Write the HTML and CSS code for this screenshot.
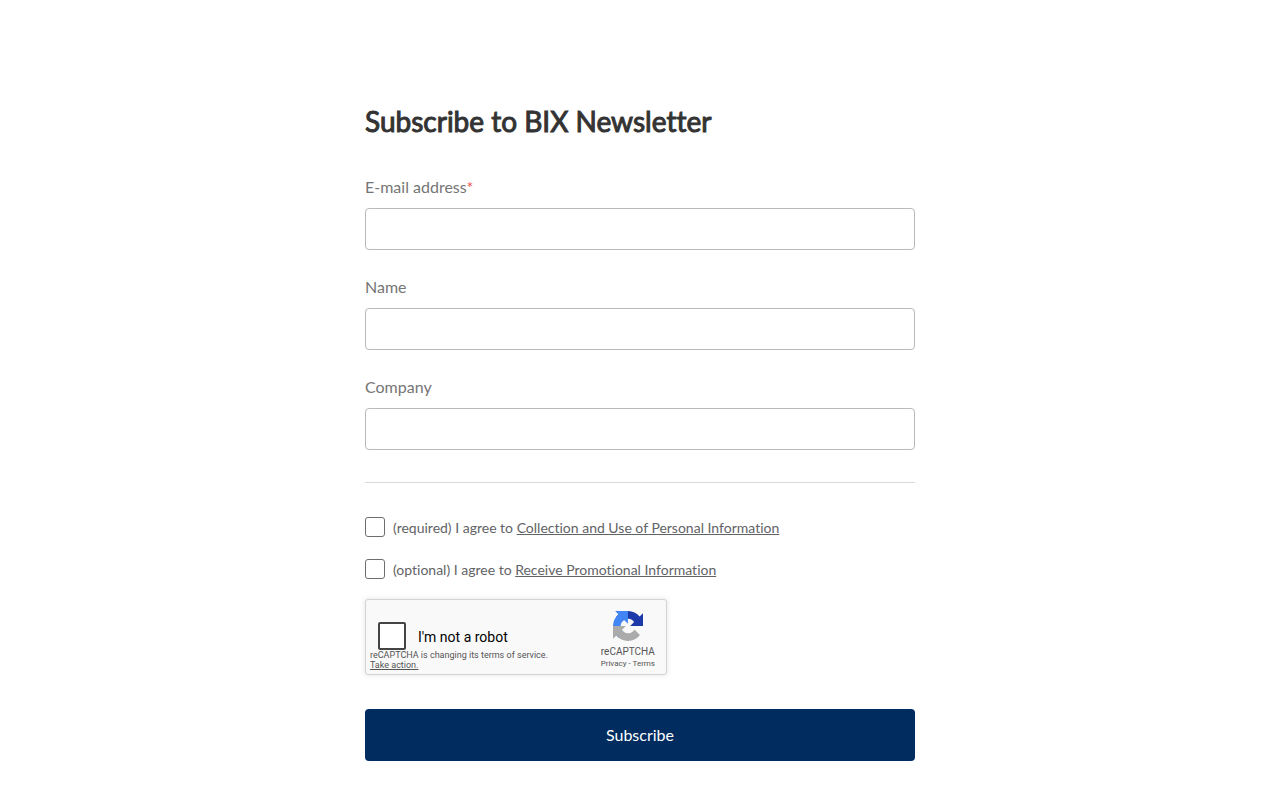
FILE: index.html
```html
<!DOCTYPE html>
<html lang="en">
<head>
    <meta charset="UTF-8">
    <meta name="viewport" content="width=device-width, initial-scale=1.0">
    <title>Subscribe to BIX Newsletter</title>
    <link rel="stylesheet" href="styles.css">
</head>
<body>
    <main class="subscribe">
        <h1>Subscribe to BIX Newsletter</h1>
        <form>
            <div class="field">
                <label for="email">E-mail address<span class="required">*</span></label>
                <input type="email" id="email" name="email" required>
            </div>
            <div class="field">
                <label for="name">Name</label>
                <input type="text" id="name" name="name">
            </div>
            <div class="field">
                <label for="company">Company</label>
                <input type="text" id="company" name="company">
            </div>
            <hr>
            <div class="agree">
                <input type="checkbox" id="agree-privacy" required>
                <label for="agree-privacy">(required) I agree to <a href="#privacy">Collection and Use of Personal Information</a></label>
            </div>
            <div class="agree">
                <input type="checkbox" id="agree-promo">
                <label for="agree-promo">(optional) I agree to <a href="#promo">Receive Promotional Information</a></label>
            </div>
            <div class="captcha">
                <div class="captcha-main">
                    <div class="captcha-check">
                        <input type="checkbox" id="robot">
                        <label for="robot">I'm not a robot</label>
                    </div>
                    <p class="captcha-notice">reCAPTCHA is changing its terms of service.<br><a href="#action">Take action.</a></p>
                </div>
                <div class="captcha-brand">
                    <svg width="30" height="30" viewBox="0 0 64 64" aria-hidden="true">
                        <path fill="#1c3aa9" d="M64 31.955l-.033-1.37V4.687l-7.16 7.16C50.948 4.674 42.033.093 32.05.093c-10.4 0-19.622 4.96-25.458 12.64l11.736 11.86a15.55 15.55 0 0 1 4.754-5.334c2.05-1.6 4.952-2.906 8.968-2.906.485 0 .86.057 1.135.163 4.976.393 9.288 3.14 11.828 7.124l-8.307 8.307L64 31.953"/>
                        <path fill="#4285f4" d="M31.862.094l-1.37.033H4.594l7.16 7.16C4.58 13.147 0 22.06 0 32.046c0 10.4 4.96 19.622 12.64 25.458L24.5 45.768a15.55 15.55 0 0 1-5.334-4.754c-1.6-2.05-2.906-4.952-2.906-8.968 0-.485.057-.86.163-1.135.393-4.976 3.14-9.288 7.124-11.828l8.307 8.307L31.86.095"/>
                        <path fill="#ababab" d="M.001 32.045l.033 1.37v25.898l7.16-7.16c5.86 7.173 14.774 11.754 24.76 11.754 10.4 0 19.622-4.96 25.458-12.64l-11.736-11.86a15.55 15.55 0 0 1-4.754 5.334c-2.05 1.6-4.952 2.906-8.968 2.906-.485 0-.86-.057-1.135-.163-4.976-.393-9.288-3.14-11.828-7.124l8.307-8.307c-10.522.04-22.4.066-27.295-.005"/>
                    </svg>
                    <span class="captcha-name">reCAPTCHA</span>
                    <span class="captcha-links"><a href="#captcha-privacy">Privacy</a> - <a href="#captcha-terms">Terms</a></span>
                </div>
            </div>
            <button type="submit">Subscribe</button>
        </form>
    </main>
</body>
</html>
```
FILE: styles.css
```css
* {
    box-sizing: border-box;
}
body {
    margin: 0;
    font-family: Lato, sans-serif;
    font-size: 16px;
    font-variant-ligatures: none;
    color: #757575;
    background-color: #fff;
}
.subscribe {
    max-width: 582px;
    margin: 0 auto;
    padding: 103px 16px 32px;
}
h1 {
    margin: 0 0 36px;
    font-size: 28px;
    line-height: 36px;
    font-weight: 400;
    color: #333;
    -webkit-text-stroke: 1px #333;
}
.field {
    margin-bottom: 25px;
}
.field label {
    display: block;
    line-height: 24px;
    margin-bottom: 9px;
}
.required {
    color: #f05050;
}
.field input {
    display: block;
    width: 100%;
    height: 42px;
    padding: 0 12px;
    font: inherit;
    border: 1px solid #b9b9b9;
    border-radius: 4px;
    background-color: #fff;
}
hr {
    margin: 32px 0 34px;
    border: 0;
    border-top: 1px solid #d9d9d9;
}
.agree {
    display: flex;
    align-items: flex-start;
    gap: 8px;
    margin-bottom: 20px;
    font-size: 14px;
    line-height: 22px;
    color: #626366;
}
.agree input {
    appearance: none;
    width: 20px;
    height: 20px;
    margin: 0;
    border: 1px solid #6d6e71;
    border-radius: 3px;
    background-color: #fff;
}
.agree input:checked {
    background-color: #002c5f;
}
a {
    color: inherit;
}
.captcha {
    display: flex;
    justify-content: space-between;
    max-width: 302px;
    margin: -2px 0 34px;
    font-family: Roboto, sans-serif;
    color: #555;
    border: 1px solid #d3d3d3;
    border-radius: 3px;
    background-color: #f9f9f9;
    box-shadow: 0 0 4px 1px rgba(0, 0, 0, 0.08);
}
.captcha-main {
    padding: 22px 0 4px 4px;
}
.captcha-check {
    display: flex;
    align-items: center;
    gap: 12px;
    padding-left: 8px;
    font-size: 14px;
    line-height: 18px;
    color: #000;
}
.captcha-check label {
    padding-top: 2px;
}
.captcha-check input {
    appearance: none;
    width: 28px;
    height: 28px;
    margin: 0;
    border: 2px solid #444;
    border-radius: 2px;
    background-color: #fff;
}
.captcha-notice {
    margin: 0;
    font-size: 9px;
    line-height: 10px;
}
.captcha-brand {
    display: flex;
    flex-direction: column;
    align-items: center;
    padding: 11px 11px 0 0;
}
.captcha-name {
    margin-top: 5px;
    font-size: 10px;
    line-height: 12px;
}
.captcha-links {
    font-size: 8px;
    line-height: 12px;
}
.captcha-links a {
    text-decoration: none;
}
button {
    display: block;
    width: 100%;
    padding: 14px 16px;
    font: inherit;
    line-height: 24px;
    color: #fff;
    border: 0;
    border-radius: 4px;
    background-color: #002c5f;
    cursor: pointer;
}
```
